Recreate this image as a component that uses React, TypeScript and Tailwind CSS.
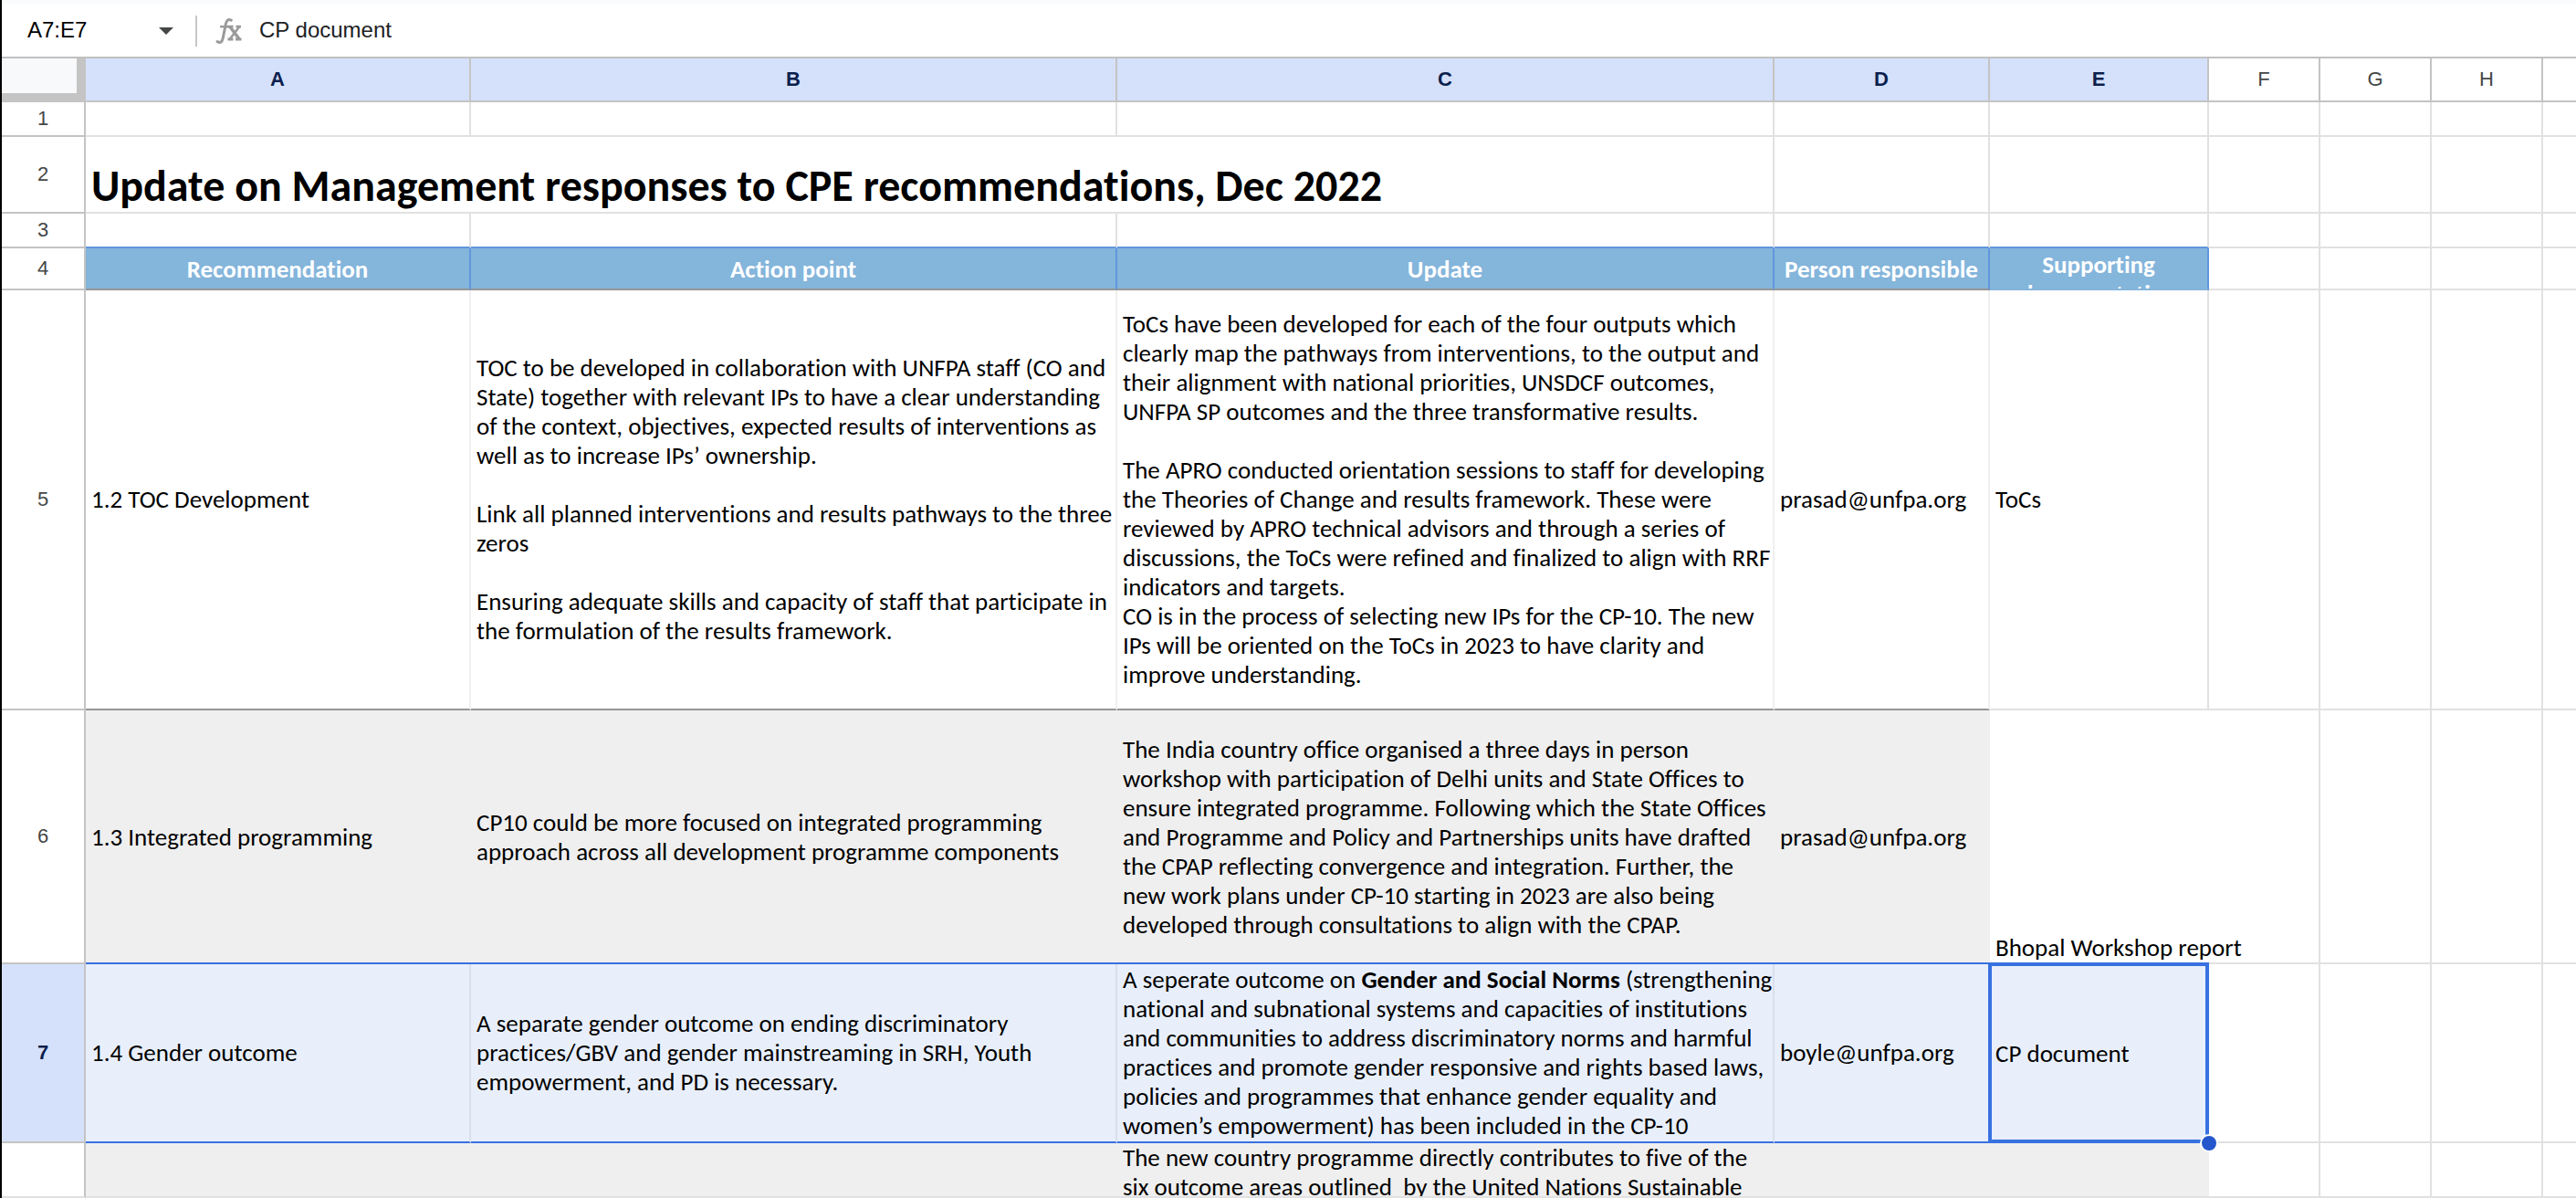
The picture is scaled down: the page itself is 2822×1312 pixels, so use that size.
import React, { useState } from 'react'
import clsx from 'clsx'

const COLUMNS = ['A', 'B', 'C', 'D', 'E', 'F', 'G', 'H', '']
const ACTIVE = 'ABCDE'
const SPARE = [5, 6, 7, 8]

const actionPoint5 = [
  'TOC to be developed in collaboration with UNFPA staff (CO and',
  'State) together with relevant IPs to have a clear understanding',
  'of the context, objectives, expected results of interventions as',
  'well as to increase IPs’ ownership.',
  '',
  'Link all planned interventions and results pathways to the three',
  'zeros',
  '',
  'Ensuring adequate skills and capacity of staff that participate in',
  'the formulation of the results framework.',
]

const update5 = [
  'ToCs have been developed for each of the four outputs which',
  'clearly map the pathways from interventions, to the output and',
  'their alignment with national priorities, UNSDCF outcomes,',
  'UNFPA SP outcomes and the three transformative results.',
  '',
  'The APRO conducted orientation sessions to staff for developing',
  'the Theories of Change and results framework. These were',
  'reviewed by APRO technical advisors and through a series of',
  'discussions, the ToCs were refined and finalized to align with RRF',
  'indicators and targets.',
  'CO is in the process of selecting new IPs for the CP-10. The new',
  'IPs will be oriented on the ToCs in 2023 to have clarity and',
  'improve understanding.',
]

const actionPoint6 = [
  'CP10 could be more focused on integrated programming',
  'approach across all development programme components',
]

const update6 = [
  'The India country office organised a three days in person',
  'workshop with participation of Delhi units and State Offices to',
  'ensure integrated programme. Following which the State Offices',
  'and Programme and Policy and Partnerships units have drafted',
  'the CPAP reflecting convergence and integration. Further, the',
  'new work plans under CP-10 starting in 2023 are also being',
  'developed through consultations to align with the CPAP.',
]

const actionPoint7 = [
  'A separate gender outcome on ending discriminatory',
  'practices/GBV and gender mainstreaming in SRH, Youth',
  'empowerment, and PD is necessary.',
]

const update7 = [
  'national and subnational systems and capacities of institutions',
  'and communities to address discriminatory norms and harmful',
  'practices and promote gender responsive and rights based laws,',
  'policies and programmes that enhance gender equality and',
  'women’s empowerment) has been included in the CP-10',
]

const update8 = [
  'The new country programme directly contributes to five of the',
  'six outcome areas outlined  by the United Nations Sustainable',
]

const TEXT = 'px-1.5 text-left whitespace-pre'
const GRID = 'border-r-2 border-b-2 border-[#e1e1e1]'
const SHADED = 'bg-[#efefef]'
const SELECTED = 'bg-[#e8effb] border-b-2 border-b-[#3871e0]'
const BANNER = 'bg-[#84b5db] border-r-2 border-b-2 border-r-[#6196dc] px-1.5 pt-0.5 text-center font-bold text-white'

function RowHeader({ n, active = false }: { n?: number; active?: boolean }) {
  return (
    <th
      scope="row"
      className={clsx(
        'border-r-2 border-b-2 border-[#c4c4c4] text-center font-[Liberation_Sans,sans-serif] text-[22px]',
        active ? 'bg-[#d5e1fb] font-bold text-[#0b1f4d]' : 'font-normal text-[#444746]',
        n === undefined && 'border-b-[#e1e1e1]',
      )}
    >
      {n}
    </th>
  )
}

function Spare() {
  return (
    <>
      {SPARE.map((i) => (
        <td key={i} className={GRID} />
      ))}
    </>
  )
}

function FxIcon() {
  return (
    <svg viewBox="0 0 30 30" className="size-[30px]" fill="none" stroke="#9a9a9a" aria-hidden="true">
      <path d="M2 26.5c3 2 5.300.800 6.100-3.200L11.300 7.500C12.100 3.200 14 1.600 17.300 3.200" strokeWidth="3" strokeLinecap="round" />
      <path d="M5 10.200h10" strokeWidth="2.400" />
      <path d="M16 10.500l10 13" strokeWidth="3.400" />
      <path d="M26 10.500l-10 13" strokeWidth="2.600" />
      <path d="M13.500 10.200h6M22.500 10.200h5.500M13.500 24h6M22 24h6.500" strokeWidth="2.800" />
    </svg>
  )
}

function FormulaBar() {
  const [range, setRange] = useState('A7:E7')
  const [value, setValue] = useState('CP document')
  return (
    <header className="flex h-16 items-stretch border-t-[5px] border-b-2 border-t-[#f9fbfd] border-b-[#c0c0c0] bg-white font-[Liberation_Sans,sans-serif] text-2xl">
      <input
        aria-label="Name box"
        value={range}
        onChange={(e) => setRange(e.target.value)}
        className="w-40 pb-0.5 pl-7 text-black outline-none"
      />
      <button aria-label="Show named ranges" className="flex w-12 items-center justify-start pl-3">
        <svg viewBox="0 0 16 8" className="h-2 w-4" fill="#444746">
          <path d="M0 0h16l-8 8z" />
        </svg>
      </button>
      <div className="my-auto ml-1 h-[34px] w-0.5 bg-[#c7c7c7]" />
      <label htmlFor="formula" className="flex items-center pr-4 pl-5">
        <FxIcon />
      </label>
      <input
        id="formula"
        aria-label="Formula"
        value={value}
        onChange={(e) => setValue(e.target.value)}
        className="min-w-0 flex-1 pb-0.5 pl-0.5 text-[#202124] outline-none"
      />
    </header>
  )
}

export default function App() {
  return (
    <main className="overflow-hidden border-l-2 border-black bg-white">
      <FormulaBar />
      <table className="w-full min-w-[2800px] table-fixed border-separate border-spacing-0 font-[Carlito,Calibri,Lato,sans-serif] text-[27px] leading-8 text-black [font-variant-ligatures:no-common-ligatures]">
        <colgroup>
          <col className="w-[92px]" />
          <col className="w-[422px]" />
          <col className="w-[708px]" />
          <col className="w-[720px]" />
          <col className="w-[236px]" />
          <col className="w-[240px]" />
          <col className="w-[122px]" />
          <col className="w-[122px]" />
          <col className="w-[122px]" />
          <col />
        </colgroup>
        <thead>
          <tr className="h-12 font-[Liberation_Sans,sans-serif] text-[22px]">
            <td className="border-r-10 border-b-10 border-[#c4c4c4] bg-[#f8f9fb]" />
            {COLUMNS.map((name, i) => (
              <th
                key={i}
                scope="col"
                className={clsx(
                  'border-b-2 border-[#c4c4c4] text-center',
                  name && 'border-r-2',
                  name && ACTIVE.includes(name) ? 'bg-[#d5e1fb] font-bold text-[#0b1f4d]' : 'font-normal text-[#444746]',
                )}
              >
                {name}
              </th>
            ))}
          </tr>
        </thead>
        <tbody className="[&_td:last-child]:border-r-0">
          <tr className="h-[38px]">
            <RowHeader n={1} />
            {COLUMNS.map((_, i) => (
              <td key={i} className={GRID} />
            ))}
          </tr>
          <tr className="h-[84px]">
            <RowHeader n={2} />
            <td colSpan={3} className={clsx(GRID, TEXT, 'align-bottom text-5xl leading-14 font-bold')}>
              Update on Management responses to CPE recommendations, Dec 2022
            </td>
            <td className={GRID} />
            <td className={GRID} />
            <Spare />
          </tr>
          <tr className="h-[38px]">
            <RowHeader n={3} />
            {COLUMNS.map((name, i) => (
              <td key={i} className={clsx(GRID, name && ACTIVE.includes(name) && 'border-b-[#6196dc]')} />
            ))}
          </tr>
          <tr className="h-[46px]">
            <RowHeader n={4} />
            {['Recommendation', 'Action point', 'Update', 'Person responsible'].map((title) => (
              <td key={title} className={clsx(BANNER, 'border-b-[#969696] whitespace-nowrap')}>
                {title}
              </td>
            ))}
            <td className={clsx(BANNER, 'border-b-[#84b5db]')}>
              <div className="h-[42px] overflow-hidden">Supporting documentation</div>
            </td>
            <Spare />
          </tr>
          <tr className="h-[460px]">
            <RowHeader n={5} />
            <td className={clsx(TEXT, 'border-r-2 border-b-2 border-r-[#efefef] border-b-[#969696]')}>1.2 TOC Development</td>
            <td className={clsx(TEXT, 'border-r-2 border-b-2 border-r-[#efefef] border-b-[#969696]')}>{actionPoint5.join('\n')}</td>
            <td className={clsx(TEXT, 'border-r-2 border-b-2 border-r-[#efefef] border-b-[#969696]')}>{update5.join('\n')}</td>
            <td className={clsx(TEXT, 'border-r-2 border-b-2 border-r-[#efefef] border-b-[#969696]')}>prasad@unfpa.org</td>
            <td className={clsx(TEXT, GRID)}>ToCs</td>
            <Spare />
          </tr>
          <tr className="h-[278px]">
            <RowHeader n={6} />
            <td className={clsx(TEXT, SHADED, 'border-b-2 border-b-[#3871e0] pt-0.5')}>1.3 Integrated programming</td>
            <td className={clsx(TEXT, SHADED, 'border-b-2 border-b-[#3871e0] pt-0.5')}>{actionPoint6.join('\n')}</td>
            <td className={clsx(TEXT, SHADED, 'border-b-2 border-b-[#3871e0] pt-0.5')}>{update6.join('\n')}</td>
            <td className={clsx(TEXT, SHADED, 'border-b-2 border-b-[#3871e0] pt-0.5')}>prasad@unfpa.org</td>
            <td className={clsx(TEXT, 'border-b-2 border-b-[#3871e0] align-bottom')}>Bhopal Workshop report</td>
            <Spare />
          </tr>
          <tr className="h-[196px]">
            <RowHeader n={7} active />
            <td className={clsx(TEXT, SELECTED, 'border-r-2 border-r-[#d9dfec]')}>1.4 Gender outcome</td>
            <td className={clsx(TEXT, SELECTED, 'border-r-2 border-r-[#d9dfec]')}>{actionPoint7.join('\n')}</td>
            <td className={clsx(TEXT, SELECTED, 'border-r-2 border-r-[#d9dfec]')}>
              <p>
                A seperate outcome on <b className="font-bold">Gender and Social Norms</b> (strengthening
              </p>
              <p>{update7.join('\n')}</p>
            </td>
            <td className={clsx(TEXT, SELECTED)}>boyle@unfpa.org</td>
            <td className={clsx(TEXT, 'relative bg-[#e8effb]')}>
              CP document
              <span className="pointer-events-none absolute -top-0.5 right-0 bottom-0 -left-0.5 border-4 border-[#3871e0]" />
              <span className="absolute -right-2.5 -bottom-2.5 z-10 size-5 rounded-full border-2 border-white bg-[#2457cc]" />
            </td>
            <Spare />
          </tr>
          <tr className="h-[60px]">
            <RowHeader />
            <td className={clsx(SHADED, 'border-b-2 border-b-[#e1e1e1]')} />
            <td className={clsx(SHADED, 'border-b-2 border-b-[#e1e1e1]')} />
            <td className={clsx(TEXT, SHADED, 'border-b-2 border-b-[#e1e1e1]')}>
              <div className="h-[58px] overflow-hidden">{update8.join('\n')}</div>
            </td>
            <td className={clsx(SHADED, 'border-b-2 border-b-[#e1e1e1]')} />
            <td className={clsx(SHADED, 'border-b-2 border-b-[#e1e1e1]')} />
            <Spare />
          </tr>
        </tbody>
      </table>
    </main>
  )
}
